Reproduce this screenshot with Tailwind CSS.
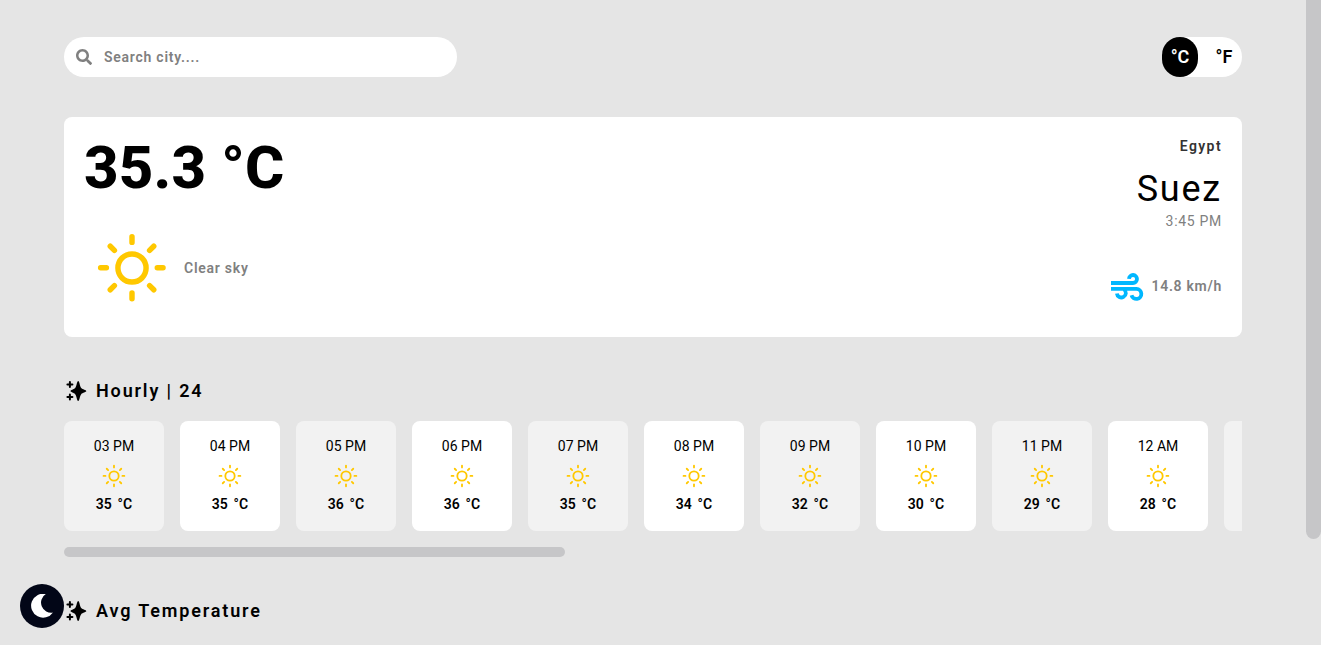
<!DOCTYPE html>
<html lang="en">
<head>
<meta charset="utf-8">
<title>Weather</title>
<script src="https://cdn.jsdelivr.net/npm/@tailwindcss/browser@4"></script>
</head>
<body class="h-screen overflow-hidden bg-[#e5e5e5] font-[Roboto,sans-serif] text-black">
<svg class="hidden">
  <symbol id="sun" viewBox="0 0 30 30">
    <circle cx="15" cy="15" r="4.4" fill="none" stroke="#ffc800" stroke-width="1.7"/>
    <path d="M15 5.200v1.800M15 22.800v1.800M5.200 14.900h1.800M22.900 14.900h1.800M8.200 8.200l1.300 1.300M20.500 20.500l1.300 1.300M8.200 21.800l1.300-1.300M20.500 9.500l1.300-1.300" fill="none" stroke="#ffc800" stroke-width="1.7" stroke-linecap="round"/>
  </symbol>
  <symbol id="spark" viewBox="0 0 24 24">
    <path d="M14.200 2C15.500 2 15.800 7.500 17.200 9S22.300 10.900 22.300 12.100S18.600 13.700 17.200 15.200S15.500 22 14.200 22S12.600 16.700 11.200 15.200S6.500 13.300 6.500 12.100S9.800 10.500 11.200 9S12.900 2 14.200 2Z"/>
    <path d="M5.900 3.100v5M3.400 5.600h5M5.900 15.600v5M3.400 18.100h5" stroke="#000" stroke-width="2" stroke-linecap="round"/>
  </symbol>
</svg>
<div class="flex h-full">
  <main class="flex w-[1306px] flex-col pt-[37px] pr-16 pl-16">
    <header class="flex h-10 justify-between">
      <div class="flex w-[393px] items-center gap-3 rounded-full bg-white pl-3 text-sm font-semibold tracking-[0.75px] text-[#808080]">
        <svg class="size-4 fill-[#808080]" viewBox="0 0 512 512"><path d="M505 442.700L405.300 343c-4.500-4.500-10.600-7-17-7H372c27.600-35.300 44-79.700 44-128C416 93.100 322.900 0 208 0S0 93.100 0 208s93.100 208 208 208c48.300 0 92.700-16.400 128-44v16.300c0 6.400 2.500 12.500 7 17l99.700 99.700c9.400 9.400 24.600 9.400 33.900 0l28.300-28.300c9.400-9.400 9.400-24.600.1-34zM208 336c-70.700 0-128-57.200-128-128 0-70.700 57.200-128 128-128 70.700 0 128 57.200 128 128 0 70.700-57.200 128-128 128z"/></svg>
        <span>Search city....</span>
      </div>
      <div class="flex w-20 justify-between rounded-full bg-white text-lg font-semibold">
        <span class="flex w-9 items-center justify-center rounded-full bg-black text-white">°C</span>
        <span class="flex w-9 items-center justify-center">°F</span>
      </div>
    </header>

    <section class="mt-10 flex h-[220px] shrink-0 justify-between rounded-lg bg-white px-5">
      <div>
        <h1 class="mt-[21px] h-[60px] text-[60px] leading-[60px] font-extrabold tracking-[0.15px] whitespace-nowrap">35.3 °C</h1>
        <div class="mt-[22px] flex items-center gap-1">
          <svg class="size-24"><use href="#sun"/></svg>
          <span class="text-sm font-semibold tracking-[0.75px] text-[#808080]">Clear sky</span>
        </div>
      </div>
      <div class="flex flex-col items-end">
        <p class="mt-[19px] text-sm font-semibold tracking-[1.4px] text-[#333]">Egypt</p>
        <h2 class="mt-[13px] text-4xl tracking-[1.8px]">Suez</h2>
        <p class="mt-0.5 text-sm tracking-[0.7px] text-[#808080]">3:45 PM</p>
        <div class="mt-[39px] flex items-center gap-2">
          <svg class="h-8 w-[33px]" viewBox="0 0 33 32" fill="none" stroke="#00b7ff" stroke-width="3.800"><path d="M0 13h22a4 4 0 1 0-4-4.200M0 18.900h25.500a5 5 0 1 1-5 6.300M13.200 19.500a4.500 4.500 0 1 1-7.300 4"/></svg>
          <span class="text-sm font-semibold tracking-[0.7px] text-[#808080]">14.8 km/h</span>
        </div>
      </div>
    </section>

    <h3 class="mt-10 flex h-7 items-center gap-2 text-lg font-semibold tracking-[1.85px]"><svg class="size-6"><use href="#spark"/></svg><span>Hourly | 24</span></h3>
    <div id="hours" class="mt-4 flex h-[110px] shrink-0 gap-4 overflow-hidden"></div>
    <div class="mt-4 h-2.5 w-[501px] shrink-0 rounded-full bg-[#c6c6c8]"></div>
    <h3 class="mt-10 flex h-7 shrink-0 items-center gap-2 text-lg font-semibold tracking-[1.85px]"><svg class="size-6"><use href="#spark"/></svg><span>Avg Temperature</span></h3>
  </main>
  <div class="h-[539px] w-[15px] rounded-b-full bg-[#c6c6c8]"></div>
</div>
<button class="fixed bottom-[17px] left-5 flex size-11 items-center justify-center rounded-full bg-[#020617]">
  <svg class="size-6 fill-white" viewBox="0 0 24 24"><path d="M15.800 0A12 12 0 1 0 23 18.500A10.100 10.100 0 0 1 15.800 0Z"/></svg>
</button>
<script>
const hours = [['03 PM',35],['04 PM',35],['05 PM',36],['06 PM',36],['07 PM',35],['08 PM',34],['09 PM',32],['10 PM',30],['11 PM',29],['12 AM',28],['',null]];
document.getElementById('hours').innerHTML = hours.map(([t, d], i) => `
  <div class="flex w-[100px] shrink-0 flex-col items-center rounded-lg pt-[15px] text-sm ${i % 2 ? 'bg-white' : 'bg-[#f2f2f2]'}">
    ${t ? `<span>${t}</span>
    <svg class="mt-1 size-8"><use href="#sun"/></svg>
    <span class="mt-0.5 font-semibold tracking-[0.1px] [word-spacing:2px]">${d} °C</span>` : ''}
  </div>`).join('');
</script>
</body>
</html>
